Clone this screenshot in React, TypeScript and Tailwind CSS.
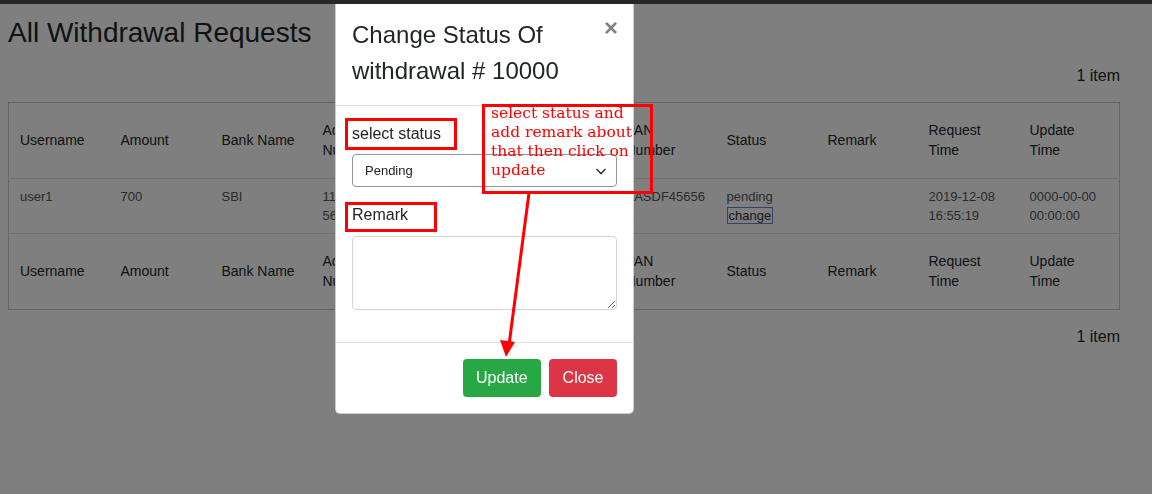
import { ReactNode } from "react";

type Column = {
  label: string;
};

const columns: Column[] = [
  { label: "Username" },
  { label: "Amount" },
  { label: "Bank Name" },
  { label: "Account Number" },
  { label: "IFSC Code" },
  { label: "Account Holder" },
  { label: "PAN Number" },
  { label: "Status" },
  { label: "Remark" },
  { label: "Request Time" },
  { label: "Update Time" },
];

const HeaderRow = ({ bottom }: { bottom?: boolean }) => (
  <tr className={bottom ? "" : "border-b border-[#dee2e6]"}>
    {columns.map((col) => (
      <th
        key={col.label}
        className="pt-[17px] pb-[18px] px-[11px] text-left align-middle font-normal text-[14px] leading-5 text-[#212529]"
      >
        {col.label}
      </th>
    ))}
  </tr>
);

const Cell = ({ children }: { children?: ReactNode }) => (
  <td className="py-2 px-[11px] align-top text-[13px] leading-[19px] text-[#555]">
    {children}
  </td>
);

const ItemCount = () => (
  <div className="text-right text-base leading-6 text-[#212529]">1 item</div>
);

const App = () => {
  return (
    <div
      className="relative min-h-[494px] bg-white"
      style={{ fontFamily: '"Liberation Sans", Arial, sans-serif' }}
    >
      <div className="pl-2 pr-8 pt-4">
        <h2 className="text-[28px] leading-[1.2] font-normal text-[#212529]">
          All Withdrawal Requests
        </h2>
        <div className="mt-[14px]">
          <ItemCount />
        </div>
        <table className="w-full table-fixed mt-[14px] border border-[#c6c8ca] border-collapse">
          <thead>
            <HeaderRow />
          </thead>
          <tbody>
            <tr className="border-b border-[#dee2e6]">
              <Cell>user1</Cell>
              <Cell>700</Cell>
              <Cell>SBI</Cell>
              <Cell>
                <div className="whitespace-nowrap">1123456789</div>
                <div>5678</div>
              </Cell>
              <Cell>SBIN0001234</Cell>
              <Cell>Rahul</Cell>
              <Cell>
                <div className="whitespace-nowrap">AASDF45656</div>
                <div>A</div>
              </Cell>
              <Cell>
                <div>pending</div>
                <span className="border border-[#5b8fc7] px-[1px] text-[#333]">change</span>
              </Cell>
              <Cell></Cell>
              <Cell>2019-12-08 16:55:19</Cell>
              <Cell>0000-00-00 00:00:00</Cell>
            </tr>
          </tbody>
          <tfoot>
            <HeaderRow bottom />
          </tfoot>
        </table>
        <div className="mt-[15px]">
          <ItemCount />
        </div>
      </div>

      {/* modal backdrop */}
      <div className="fixed inset-0 bg-black/50" />

      {/* modal */}
      <div className="fixed left-[335px] top-0 w-[299px] bg-white rounded-[5px] border border-black/20 text-[#212529]">
        <div className="flex items-start p-4 border-b border-[#dee2e6]">
          <h4 className="flex-1 text-[24px] leading-[36px] font-normal">
            Change Status Of withdrawal # 10000
          </h4>
          <button className="-mr-[1px] -mt-[1px] text-[24px] leading-6 font-bold text-black/50">
            ×
          </button>
        </div>
        <div className="px-4 pt-4 pb-4">
          <label className="block text-base leading-6 mb-2">select status</label>
          <div className="flex items-center justify-between h-[33px] border border-[#8e959c] rounded-[4px] pl-3 pr-2 mb-4">
            <span className="text-[13px]">Pending</span>
            <svg width="14" height="14" viewBox="0 0 14 14" fill="none">
              <path d="M2.5 5l4.5 4.5 4.5-4.5" stroke="#343a40" strokeWidth="1.6" />
            </svg>
          </div>
          <label className="block text-base leading-6 mb-[9px]">Remark</label>
          <textarea className="block w-full h-[74px] border border-[#ced4da] rounded-[4px] mb-4" />
        </div>
        <div className="flex justify-end gap-2 px-4 pt-[16px] pb-[16px] border-t border-[#dee2e6]">
          <button className="h-[38px] px-[13.5px] rounded-[4px] bg-[#28a745] text-white text-base">
            Update
          </button>
          <button className="h-[38px] px-[13.5px] rounded-[4px] bg-[#dc3545] text-white text-base">
            Close
          </button>
        </div>
      </div>

      {/* annotations */}
      <div className="fixed left-[345px] top-[118px] w-[112px] h-[32px] border-[3px] border-[#ff0000]" />
      <div className="fixed left-[345px] top-[202px] w-[92px] h-[30px] border-[3px] border-[#ff0000]" />
      <div className="fixed left-[482px] top-[104px] w-[171px] h-[90px] border-[3px] border-[#ff0000]" />
      <div
        className="fixed left-[491px] top-[104px] text-[15.5px] leading-[19px] text-[#ff0000]"
        style={{ fontFamily: '"DejaVu Serif", serif' }}
      >
        select status and
        <br />
        add remark about
        <br />
        that then click on
        <br />
        update
      </div>
      <svg className="fixed left-0 top-0 pointer-events-none" width="1152" height="494">
        <line x1="529" y1="193" x2="509" y2="345" stroke="#ff0000" strokeWidth="3" />
        <polygon points="500,340 515,342 506,357" fill="#ff0000" />
      </svg>

      {/* top bar */}
      <div className="fixed left-0 right-0 top-0 h-1 bg-[#23282d]" />
    </div>
  );
};

export default App;
